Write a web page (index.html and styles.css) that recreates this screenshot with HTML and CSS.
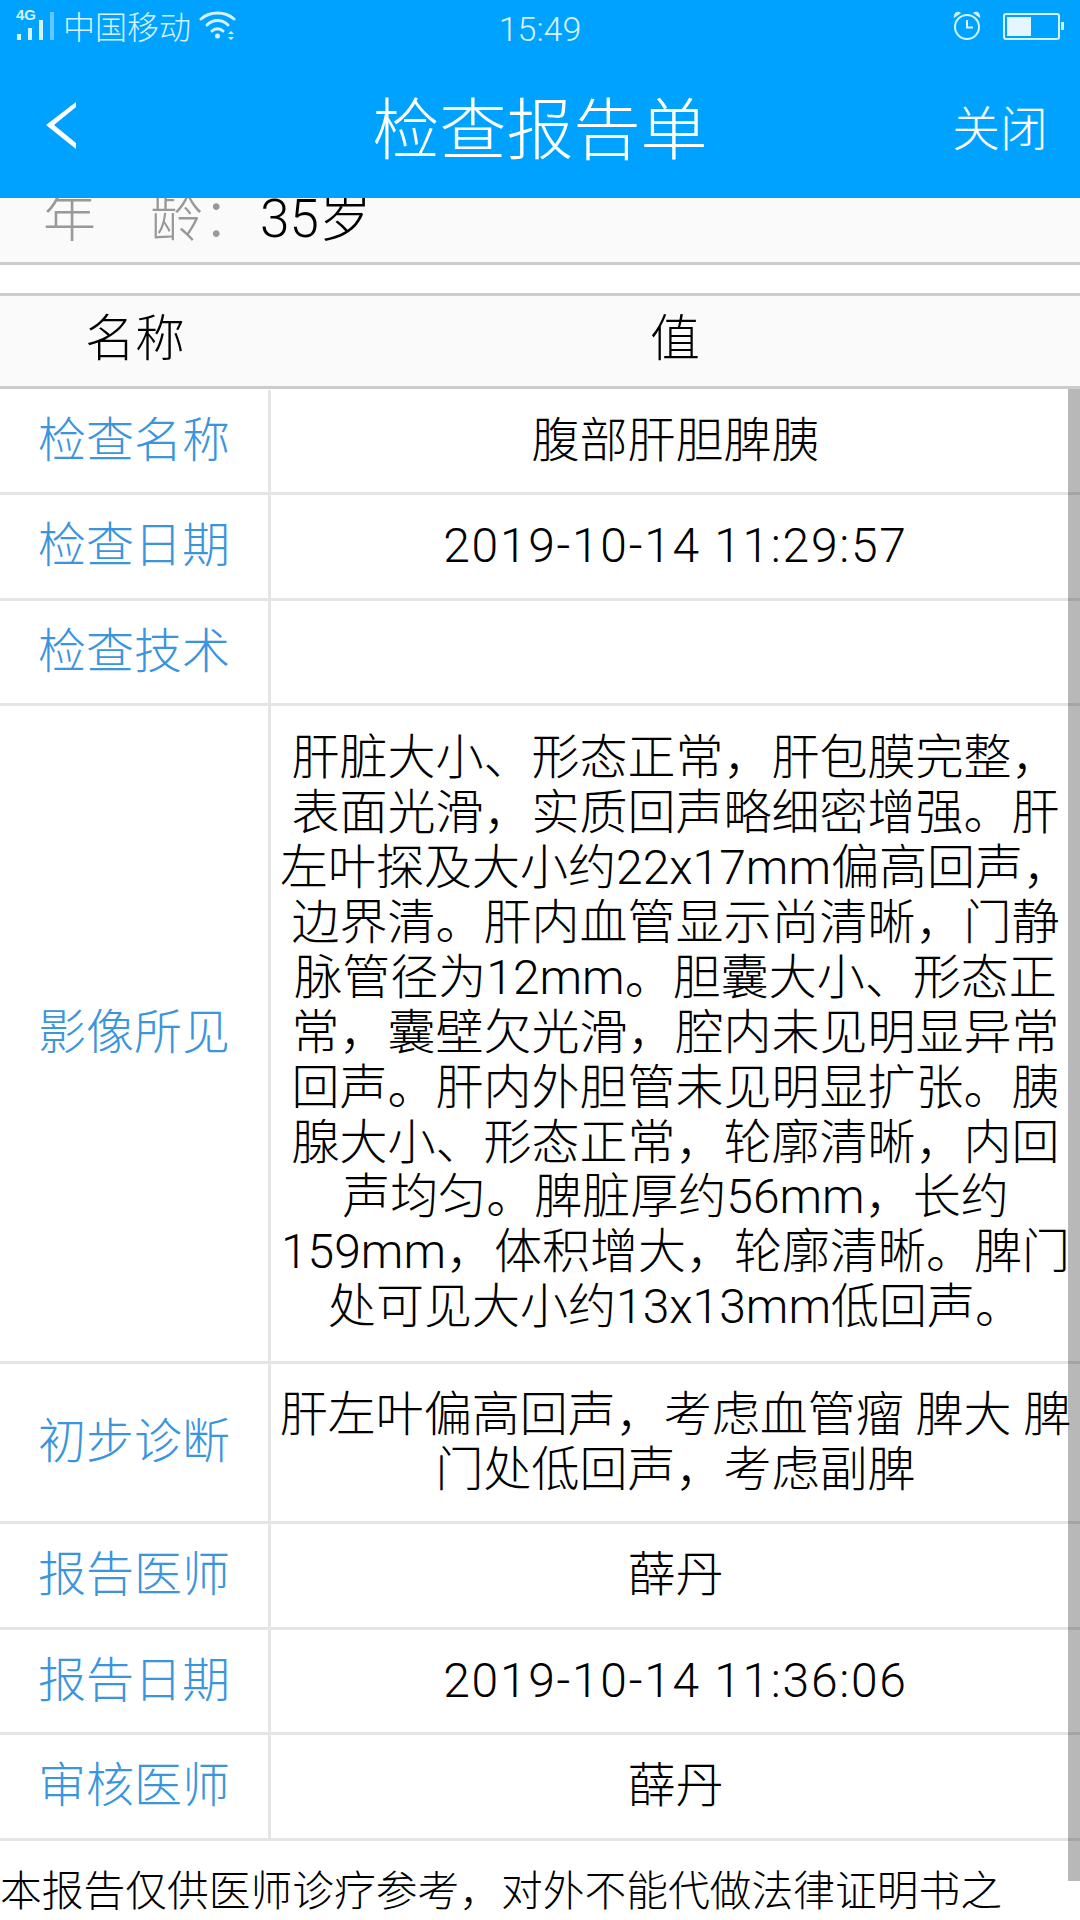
FILE: index.html
```html
<!DOCTYPE html>
<html lang="zh-CN">
<head>
<meta charset="utf-8">
<title>检查报告单</title>
<link rel="stylesheet" href="styles.css">
</head>
<body>
<div class="phone">
  <header class="appbar">
    <div class="status">
      <div class="status-left">
        <svg class="sig" width="40" height="36" viewBox="0 -4 40 36">
          <text x="0" y="9" class="sig-text">4G</text>
          <rect x="1" y="23" width="4" height="6" fill="#d6f1ff"/>
          <rect x="12" y="17" width="4" height="12" fill="#d6f1ff"/>
          <rect x="23" y="9" width="4" height="20" fill="#d6f1ff"/>
          <rect x="34" y="1" width="4" height="28" fill="#66c6ff"/>
        </svg>
        <span class="carrier">中国移动</span>
        <svg class="wifi" width="38" height="30" viewBox="0 0 38 30" fill="none" stroke="#d6f1ff" stroke-width="3" stroke-linecap="round">
          <path d="M2 9 C11 1 26 1 35 9"/>
          <path d="M8 15 C14 9 23 9 29 15"/>
          <path d="M13 21 C16 18 21 18 24 21"/>
          <circle cx="18.500" cy="26" r="2.500" fill="#d6f1ff" stroke="none"/>
          <path d="M29 24 L32 21 L35 24 Z M29 27 L32 30 L35 27 Z" fill="#d6f1ff" stroke="none"/>
        </svg>
      </div>
      <span class="time">15:49</span>
      <div class="status-right">
        <svg class="alarm" width="28" height="30" viewBox="0 0 28 30" fill="none" stroke="#d6f1ff">
          <circle cx="14" cy="16" r="12" stroke-width="2"/>
          <path d="M14 9 V16.500 H20" stroke-width="2"/>
          <path d="M1 7 C0 2 5 -1 8 2 Z M27 7 C28 2 23 -1 20 2 Z" fill="#d6f1ff" stroke="none"/>
        </svg>
        <div class="battery"><div class="battery-fill"></div></div>
        <div class="battery-nub"></div>
      </div>
    </div>
    <nav class="nav">
      <svg class="back" width="40" height="56" viewBox="0 0 40 56">
        <path d="M34 3 L4 26 L34 50 V44 L12 26 L34 8 Z" fill="#fff"/>
      </svg>
      <h1 class="title">检查报告单</h1>
      <span class="close">关闭</span>
    </nav>
  </header>
  <section class="age-row">
    <span class="age-key">年</span><span class="age-key age-key2">龄：</span><span class="age-val">35岁</span>
  </section>
  <div class="gap"></div>
  <div class="thead">
    <div class="th th-name">名称</div>
    <div class="th th-val">值</div>
  </div>
  <main class="tbody">
    <div class="row"><div class="k">检查名称</div><div class="v">腹部肝胆脾胰</div></div>
    <div class="row"><div class="k">检查日期</div><div class="v date">2019-10-14 11:29:57</div></div>
    <div class="row"><div class="k">检查技术</div><div class="v"></div></div>
    <div class="row row-tall"><div class="k">影像所见</div><div class="v">肝脏大小、形态正常，肝包膜完整，表面光滑，实质回声略细密增强。肝左叶探及大小约22x17mm偏高回声，边界清。肝内血管显示尚清晰，门静脉管径为12mm。胆囊大小、形态正常，囊壁欠光滑，腔内未见明显异常回声。肝内外胆管未见明显扩张。胰腺大小、形态正常，轮廓清晰，内回声均匀。脾脏厚约56mm，长约159mm，体积增大，轮廓清晰。脾门处可见大小约13x13mm低回声。</div></div>
    <div class="row"><div class="k">初步诊断</div><div class="v">肝左叶偏高回声，考虑血管瘤 脾大 脾门处低回声，考虑副脾</div></div>
    <div class="row"><div class="k">报告医师</div><div class="v">薛丹</div></div>
    <div class="row"><div class="k">报告日期</div><div class="v date">2019-10-14 11:36:06</div></div>
    <div class="row"><div class="k">审核医师</div><div class="v">薛丹</div></div>
    <p class="note">本报告仅供医师诊疗参考，对外不能代做法律证明书之</p>
    <div class="scrollbar"></div>
  </main>
</div>
</body>
</html>
```
FILE: styles.css
```css
* { box-sizing: border-box; }
html, body { margin: 0; padding: 0; background: #fff; }
body { font-family: Roboto, "Noto Sans CJK SC", sans-serif; color: #000; font-weight: 300; }
.phone { width: 1080px; height: 1920px; overflow: hidden; display: flex; flex-direction: column; }

.appbar { height: 198px; flex: none; background: #00a2ff; color: #fff; position: relative; z-index: 2; }
.status { height: 56px; display: flex; align-items: center; justify-content: space-between; padding: 0 16px; position: relative; color: #d6f1ff; }
.status-left { display: flex; align-items: center; }
.sig { display: block; margin-top: -6px; }
.sig-text { font: bold 15px "Liberation Sans", sans-serif; fill: #d6f1ff; }
.carrier { font-size: 32px; margin-left: 7px; line-height: 56px; }
.wifi { margin-left: 8px; margin-top: -6px; display: block; }
.time { position: absolute; left: 0; right: 0; top: 0; text-align: center; font-size: 34px; line-height: 58px; }
.status-right { display: flex; align-items: center; margin-top: -4px; }
.alarm { display: block; margin-right: 22px; }
.battery { width: 57px; height: 27px; border: 2px solid #d6f1ff; border-radius: 3px; padding: 2px; }
.battery-fill { width: 24px; height: 100%; background: #e4f6ff; }
.battery-nub { width: 3px; height: 8px; background: #d6f1ff; margin-left: 1px; }

.nav { height: 142px; display: flex; align-items: center; justify-content: space-between; position: relative; padding: 0 32px 0 42px; }
.back { display: block; }
.title { position: absolute; left: 0; right: 0; top: 0; margin: 0; text-align: center; font-size: 67px; font-weight: 300; line-height: 150px; }
.close { font-size: 48px; margin-top: -5px; }

.age-row { height: 67px; flex: none; background: #fafafa; border-bottom: 3px solid #ccc; display: flex; align-items: flex-end; padding: 0 0 18px 43px; font-size: 53px; line-height: 50px; white-space: nowrap; }
.age-key { color: #999; }
.age-key2 { margin-left: 54px; }
.age-val { margin-left: 4px; }
.gap { height: 28px; flex: none; background: #fff; }

.thead { height: 96px; flex: none; background: #fafafa; border-top: 3px solid #ccc; border-bottom: 3px solid #ccc; display: grid; grid-template-columns: 270px 1fr; align-items: center; text-align: center; font-size: 50px; }
.th { margin-top: -14px; }
.tbody { position: relative; flex: 1; padding-top: 1px; }
.row { display: grid; grid-template-columns: 271px 1fr; border-bottom: 3px solid #e5e5e5; }
.k { display: flex; align-items: center; justify-content: center; border-right: 3px solid #e5e5e5; color: #3a95de; font-size: 48px; line-height: 54.900px; }
.v { padding: 24px 5px 23.500px; text-align: center; font-size: 48px; line-height: 54.900px; min-height: 102.400px; }
.row-tall .v { padding-top: 25px; padding-bottom: 26px; }
.date { letter-spacing: 1.700px; }
.note { margin: 0; padding-top: 24px; font-size: 41.750px; line-height: 54px; white-space: nowrap; }
.scrollbar { position: absolute; right: 0; top: 0; width: 12px; height: 1492px; background: rgba(0, 0, 0, .28); }
```
